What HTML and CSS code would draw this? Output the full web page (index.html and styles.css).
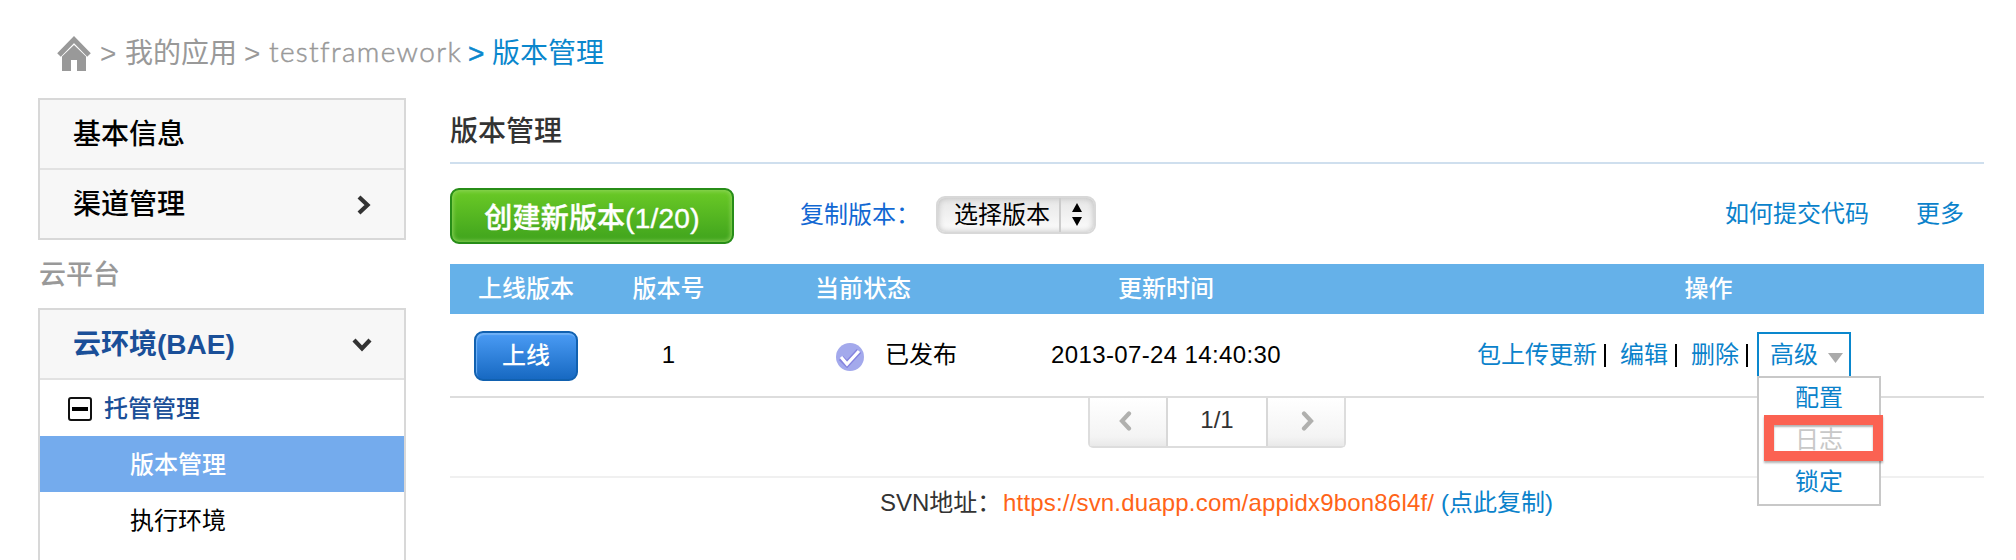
FILE: index.html
```html
<!DOCTYPE html>
<html lang="zh-CN">
<head>
<meta charset="utf-8">
<title>版本管理</title>
<link rel="stylesheet" href="styles.css">
</head>
<body>
<nav class="crumbs">
  <svg class="home" width="34" height="36" viewBox="0 0 34 36"><path d="M2 20 17 4.500l15 15.500" fill="none" stroke="#999" stroke-width="5"/><path d="M5 21.500 17 10l12 11.500V36h-9v-11h-6v11H5z" fill="#999"/></svg>
  <span class="sep">&gt;</span><a class="app">我的应用</a><span class="sep">&gt;</span><a class="latin">testframework</a><span class="sep current">&gt;</span><span class="current">版本管理</span>
</nav>
<div class="layout">
  <aside class="sidebar">
    <div class="panel">
      <div class="head">基本信息</div>
      <div class="head">渠道管理<svg class="chev" width="16" height="20" viewBox="0 0 16 20"><path d="M3 2l8.500 8L3 18" fill="none" stroke="#333" stroke-width="4.200"/></svg></div>
    </div>
    <div class="group">云平台</div>
    <div class="panel open">
      <div class="head active">云环境(BAE)<svg class="chev" width="20" height="16" viewBox="0 0 20 16"><path d="M2 3l8 8.500L18 3" fill="none" stroke="#333" stroke-width="4.200"/></svg></div>
      <div class="sub"><svg width="24" height="24" viewBox="0 0 24 24"><rect x="1" y="1" width="22" height="22" rx="2" fill="#fff" stroke="#111" stroke-width="2"/><path d="M4 12h16" stroke="#000" stroke-width="4"/></svg>托管管理</div>
      <div class="item selected">版本管理</div>
      <div class="item">执行环境</div>
    </div>
  </aside>
  <main class="main">
    <h1 class="title">版本管理</h1>
    <div class="toolbar">
      <button class="create">创建新版本(1/20)</button>
      <span class="copy-label">复制版本：</span>
      <div class="select"><span class="value">选择版本</span><svg width="26" height="34" viewBox="0 0 26 34"><path d="M7 14l5-9 5 9zM7 19h10l-5 9z" fill="#000"/></svg></div>
      <div class="help"><a>如何提交代码</a><a>更多</a></div>
    </div>
    <div class="grid thead"><span>上线版本</span><span>版本号</span><span>当前状态</span><span>更新时间</span><span class="ops-head">操作</span></div>
    <div class="grid row">
      <span><button class="online">上线</button></span>
      <span>1</span>
      <span class="status"><svg width="28" height="28" viewBox="0 0 28 28"><circle cx="14" cy="14" r="14" fill="#a3a9ec"/><path d="M5 15l6 6L23 8" fill="none" stroke="#8583df" stroke-width="6"/><path d="M5 14l6 7L23 8" fill="none" stroke="#fff" stroke-width="3.200"/></svg>已发布</span>
      <span class="date">2013-07-24 14:40:30</span>
      <div class="ops">
        <a>包上传更新</a><i></i><a>编辑</a><i></i><a>删除</a><i></i>
        <div class="more">高级<svg width="15" height="10" viewBox="0 0 15 10"><path d="M0 0h15L7.500 10z" fill="#aaa"/></svg>
          <div class="menu"><a>配置</a><a class="off">日志</a><a>锁定</a><div class="mark"></div></div>
        </div>
      </div>
    </div>
    <div class="pager">
      <span class="arrow"><svg width="14" height="20" viewBox="0 0 14 20"><path d="M11 2.500 4 10l7 7.500" fill="none" stroke="#b0b0ae" stroke-width="4.200" stroke-linecap="round"/></svg></span><span class="page">1/1</span><span class="arrow next"><svg width="14" height="20" viewBox="0 0 14 20"><path d="M3 2.500 10 10l-7 7.500" fill="none" stroke="#b0b0ae" stroke-width="4.200" stroke-linecap="round"/></svg></span>
    </div>
    <div class="svn"><span>SVN地址：</span><a class="url">https://svn.duapp.com/appidx9bon86l4f/</a><a class="clip">(点此复制)</a></div>
  </main>
</div>
</body>
</html>
```
FILE: styles.css
```css
* { box-sizing: border-box; }
body {
  margin: 0;
  height: 560px;
  overflow: hidden;
  background: #fff;
  color: #000;
  font: 24px/32px "Liberation Sans", "Noto Sans CJK SC", sans-serif;
  white-space: nowrap;
}
a { color: #0a82cb; }
button { font-family: inherit; padding: 0; }

.crumbs {
  display: flex;
  align-items: center;
  height: 98px;
  padding: 10px 0 0 57px;
  font-size: 28px;
  line-height: 40px;
  color: #999;
}
.crumbs a { color: #999; }
.crumbs .home { margin: -2px 9px 0 0; }
.crumbs .sep { width: 25px; }
.crumbs .app { margin-right: 7px; }
.crumbs .latin { width: 191px; margin: -6px 8px 0 0; font-family: Lato, sans-serif; font-weight: 300; letter-spacing: 1.350px; -webkit-text-stroke: 0.500px #999; }
.crumbs .current { color: #0a87cd; }
.crumbs .sep.current { width: 24px; -webkit-text-stroke: 0.500px #0a87cd; }

.layout { display: flex; gap: 44px; padding-left: 38px; }
.sidebar { width: 368px; flex: none; }
.panel { border: 2px solid #d8d8d8; }
.panel.open { height: 260px; }
.head {
  display: flex;
  align-items: center;
  justify-content: space-between;
  height: 68px;
  padding: 2px 32px 0 33px;
  background: #f7f7f7;
  font-size: 28px;
  font-weight: 500;
}
.head + .head { height: 70px; border-top: 2px solid #e2e2e2; }
.head.active { height: 70px; border-bottom: 2px solid #e2e2e2; color: #1a4f98; font-weight: 600; }
.group { height: 68px; line-height: 70px; padding-left: 1px; font-size: 27px; font-weight: 500; color: #999; }
.sub { display: flex; align-items: center; gap: 12px; height: 56px; padding: 1px 0 0 28px; color: #1a4f98; font-weight: 500; }
.item { height: 56px; line-height: 57px; padding-left: 90px; }
.item.selected { background: #74abed; color: #fff; font-weight: 500; }

.main { width: 1534px; flex: none; }
.title { margin: 0; height: 66px; border-bottom: 2px solid #cfdfee; font-size: 28px; line-height: 67px; font-weight: 500; color: #333; }
.toolbar { display: flex; height: 100px; padding-top: 24px; }
.create {
  width: 284px;
  height: 56px;
  border: 2px solid #278d18;
  border-radius: 9px;
  background: linear-gradient(#6bca26, #3fa31d);
  box-shadow: inset 0 0 4px 1px #8ed45b;
  color: #fff;
  font-size: 28px;
  font-weight: 500;
  letter-spacing: 0.200px;
  -webkit-text-stroke: 0.400px #fff;
}
.copy-label { width: 136px; margin-left: 66px; line-height: 53px; color: #1268d3; }
.select {
  display: flex;
  width: 160px;
  height: 38px;
  margin-top: 8px;
  border: 2px solid #d8d8d8;
  border-radius: 9px;
  background: linear-gradient(#e6e6e6, #fcfcfc);
  box-shadow: inset 0 0 6px #bbb;
}
.select .value { width: 123px; padding-left: 16px; line-height: 33px; border-right: 2px solid #ccc; }
.select svg { margin-left: 4px; }
.help { display: flex; gap: 47px; margin-left: auto; padding-right: 20px; line-height: 52px; }

.grid { display: grid; grid-template-columns: 152px 133px 256px 350px 643px; text-align: center; }
.thead { height: 50px; line-height: 49px; background: #65b1e9; color: #fff; font-weight: 500; }
.thead .ops-head { padding-left: 92px; }
.row { height: 84px; line-height: 81px; border-bottom: 2px solid #ddd; }
.online {
  width: 104px;
  height: 50px;
  border: 2px solid #1161b0;
  border-radius: 9px;
  background: linear-gradient(#4b9cf5, #1769c2);
  box-shadow: inset 1px 2px 1px #70b1f6;
  color: #fff;
  font-size: 24px;
  line-height: 42px;
  font-weight: 500;
  vertical-align: middle;
  margin-top: -2px;
}
.status { display: flex; align-items: center; gap: 21px; padding: 0 0 2px 101px; }
.status svg { margin-top: 4px; }
.date { letter-spacing: 0.370px; }
.ops { display: flex; padding-left: 136px; }
.ops i { width: 2px; height: 23px; margin: 30px 14px 0 7px; background: #000; }
.ops i:nth-of-type(3) { margin-right: 9px; }
.more {
  position: relative;
  width: 94px;
  height: 46px;
  margin-top: 18px;
  padding-left: 11px;
  border: 2px solid #0a87cd;
  border-bottom: 0;
  line-height: 42px;
  text-align: left;
  color: #0a82cb;
}
.more > svg { margin-left: 10px; }
.menu {
  position: absolute;
  z-index: 2;
  top: 42px;
  left: -2px;
  width: 124px;
  height: 130px;
  border: 2px solid #c8c8c8;
  background: #fff;
  text-align: center;
}
.menu a { display: block; height: 42px; line-height: 40px; }
.menu .off { color: #c8c8c8; }
.mark {
  position: absolute;
  left: 5px;
  top: 37px;
  width: 119px;
  height: 46px;
  border: 10px solid #fb6252;
  box-shadow: 0 2px 2px rgba(0,0,0,.3), inset 0 2px 2px rgba(0,0,0,.3);
}

.pager { display: flex; width: 258px; height: 50px; margin-left: 638px; border: 2px solid #ddd; border-top: 0; border-radius: 0 0 5px 5px; color: #333; }
.arrow { display: flex; align-items: center; width: 78px; padding: 0 0 2px 28px; background: linear-gradient(#fff, #f4f4f4 80%, #e9e9e9); border-right: 2px solid #d8d8d8; }
.page { width: 98px; line-height: 44px; text-align: center; }
.arrow.next { padding-left: 33px; border-right: 0; border-left: 2px solid #d8d8d8; }
.svn { display: flex; height: 56px; margin-top: 28px; padding-left: 430px; border-top: 2px solid #f0f0f0; line-height: 49px; color: #333; }
.svn span { width: 123px; }
.svn .url { width: 438px; color: #ff6418; letter-spacing: 0.180px; }
```
